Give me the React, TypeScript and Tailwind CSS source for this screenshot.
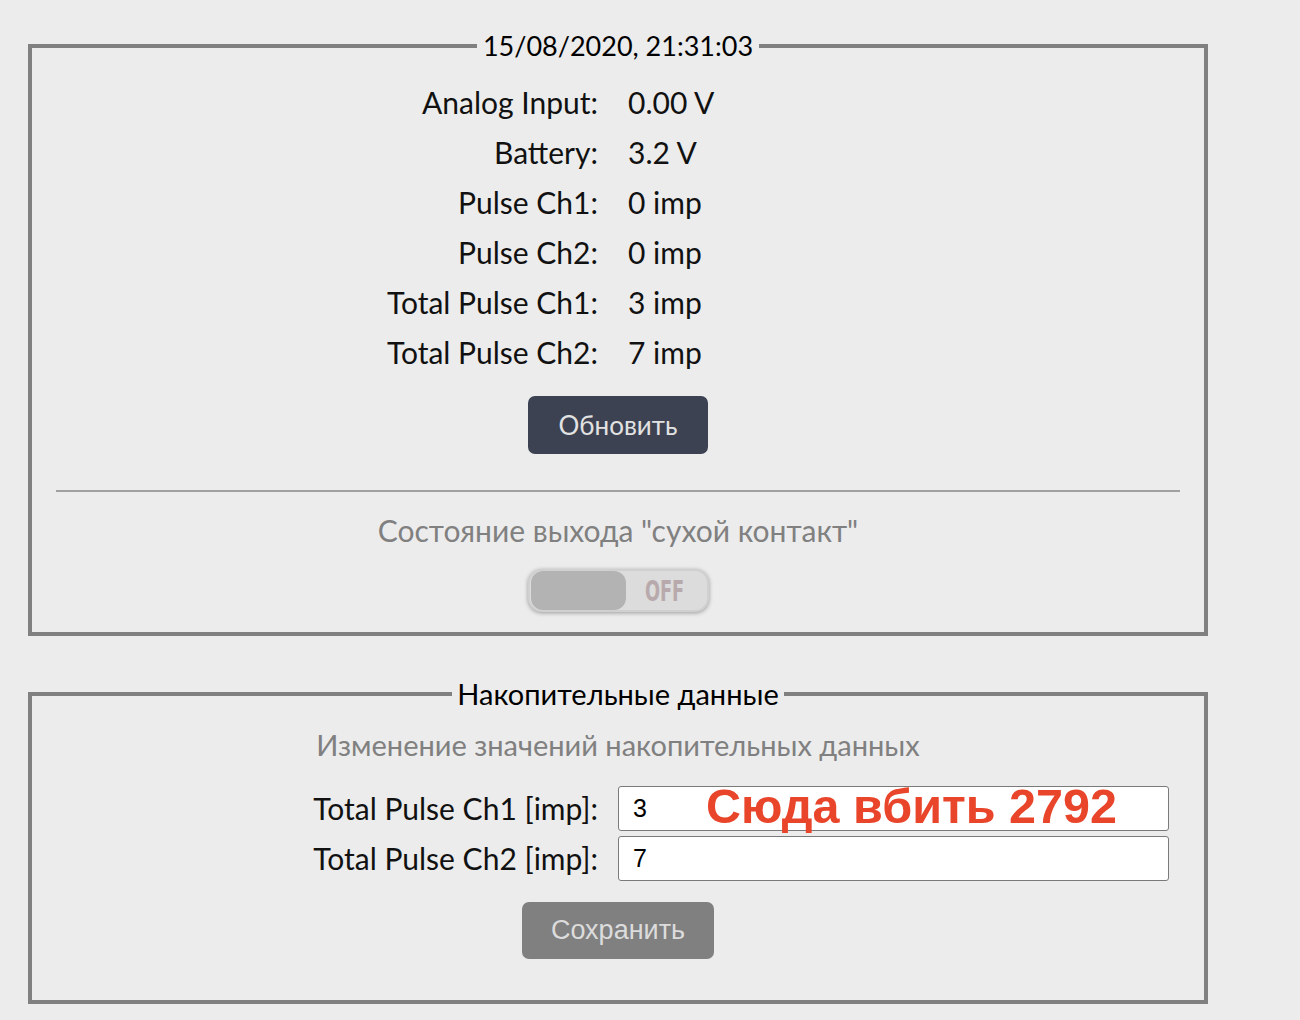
import React from "react";

const gill = { fontFamily: '"Lato", "Noto Sans", "Open Sans", sans-serif' } as React.CSSProperties;

function Row({ label, value }: { label: string; value: string }) {
  return (
    <div className="grid grid-cols-2 items-center h-[50px]">
      <div className="text-right pr-[20px]">{label}</div>
      <div className="pl-[10px]">{value}</div>
    </div>
  );
}

function InputRow({ label, value, note }: { label: string; value: string; note?: string }) {
  return (
    <div className="grid grid-cols-2 items-center h-[45px]">
      <div className="text-right pr-[20px] text-[30px]">{label}</div>
      <div className="relative h-[45px] pr-[11px]">
        <div
          className="h-full w-full bg-white border border-[#7a7a7a] rounded-[3px] flex items-center pl-[14px] text-[25px] text-black"
          style={{ fontFamily: '"Liberation Sans", Arial, sans-serif' }}
        >
          {value}
        </div>
        {note && (
          <span
            className="absolute left-[88px] top-[-8px] text-[48.5px] font-bold text-[#e9452b] leading-[56px] whitespace-nowrap"
            style={{ fontFamily: '"Liberation Sans", Arial, sans-serif' }}
          >
            {note}
          </span>
        )}
      </div>
    </div>
  );
}

export default function App() {
  return (
    <div className="min-h-[1020px] w-[1300px] bg-[#ececec] pt-[28px] text-[30px] text-[#111]" style={gill}>
      <div className="ml-[28px] w-[1180px]">
        <fieldset className="border-4 border-[#808080] px-[24px] pb-[20px]">
          <legend className="mx-auto px-[6px] text-[27px] leading-[36px] text-black">15/08/2020, 21:31:03</legend>
          <div className="mt-[13px]">
            <Row label="Analog Input:" value="0.00 V" />
            <Row label="Battery:" value="3.2 V" />
            <Row label="Pulse Ch1:" value="0 imp" />
            <Row label="Pulse Ch2:" value="0 imp" />
            <Row label="Total Pulse Ch1:" value="3 imp" />
            <Row label="Total Pulse Ch2:" value="7 imp" />
          </div>
          <button className="mt-[19px] mx-auto flex items-center justify-center w-[180px] h-[58px] rounded-[7px] bg-[#3d4252] text-[#e2e2e2] text-[26px]">
            Обновить
          </button>
          <div className="mt-[36px] border-t-2 border-[#a0a0a0]" />
          <div className="mt-[20px] text-center leading-[36px] text-[#808080] text-[30px]">
            Состояние выхода "сухой контакт"
          </div>
          <div className="mt-[21px] mx-auto w-[181px] h-[43px] rounded-[14px] bg-[#dcdcdc] border-2 border-[#d0d0d0] shadow-[0_1px_4px_rgba(0,0,0,0.35)] flex items-center p-[1px]">
            <div className="w-[95px] h-[39px] rounded-[12px] bg-[#b3b3b3]" />
            <div className="flex-1 flex justify-center">
              <span
                className="inline-block font-bold text-[29px] leading-[30px] text-[#b8aaac] scale-x-[0.68] pr-[4px]"
                style={{ fontFamily: '"Liberation Sans Narrow", "DejaVu Sans Condensed", "Liberation Sans", sans-serif' }}
              >
                OFF
              </span>
            </div>
          </div>
        </fieldset>

        <fieldset className="mt-[40px] border-4 border-[#808080] px-[24px] pb-[41px]">
          <legend className="mx-auto px-[5px] text-[29px] leading-[36px] text-black">Накопительные данные</legend>
          <div className="mt-[15px] text-center leading-[36px] text-[#808080] text-[29px]">
            Изменение значений накопительных данных
          </div>
          <div className="mt-[23px] flex flex-col gap-[5px]">
            <InputRow label="Total Pulse Ch1 [imp]:" value="3" note="Сюда вбить 2792" />
            <InputRow label="Total Pulse Ch2 [imp]:" value="7" />
          </div>
          <button
            className="mt-[21px] mx-auto flex items-center justify-center w-[192px] h-[57px] rounded-[7px] bg-[#808080] text-[#dcdcdc] text-[27px]"
            style={{ fontFamily: '"Liberation Sans", Arial, sans-serif' }}
          >
            Сохранить
          </button>
        </fieldset>
      </div>
    </div>
  );
}
